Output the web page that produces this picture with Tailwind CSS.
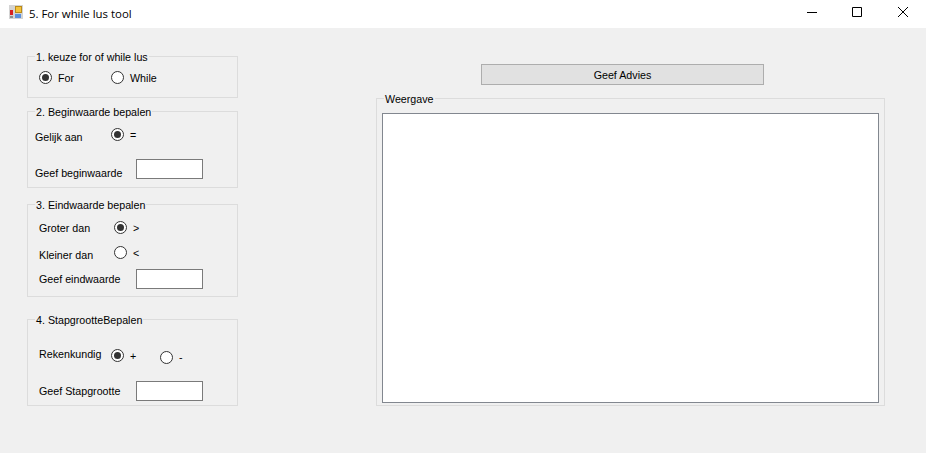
<!DOCTYPE html>
<html lang="en">
<head>
<meta charset="UTF-8">
<title>5. For while lus tool</title>
<script src="https://cdn.jsdelivr.net/npm/@tailwindcss/browser@4"></script>
</head>
<body class="w-[926px] h-[453px] overflow-hidden bg-[#f0f0f0] text-[10.7px] leading-[14px] text-black font-['Liberation_Sans',sans-serif]">

<!-- title bar -->
<header class="h-[28px] bg-white flex items-center">
  <svg class="ml-[9px] mb-[4px] w-[14px] h-[14px]" viewBox="0 0 14 14">
    <rect width="14" height="14" fill="#d4d4d4"/>
    <rect x="6.500" y="1.500" width="6" height="6" fill="#f5c33b" stroke="#b98a1a"/>
    <rect x="1" y="5" width="3" height="5" fill="#d8201f"/>
    <rect x="6" y="9" width="6" height="4" fill="#5a8fdc"/>
    <rect x="1" y="11" width="3" height="2" fill="#8f8f8f"/>
  </svg>
  <span class="ml-[6px] text-[11.4px] font-['Open_Sans',sans-serif]">5. For while lus tool</span>
  <div class="ml-auto flex">
    <svg class="w-[46px] h-[28px]" viewBox="0 0 46 28"><path d="M19 12.500h10" stroke="#000"/></svg>
    <svg class="w-[46px] h-[28px]" viewBox="0 0 46 28"><path d="M18.500 7.500h9v9h-9z" fill="none" stroke="#000"/></svg>
    <svg class="w-[46px] h-[28px]" viewBox="0 0 46 28"><path d="M18 7l10 10M28 7l-10 10" stroke="#000"/></svg>
  </div>
</header>

<main class="flex pl-[27px] pt-[21px]">
  <!-- left column -->
  <div class="w-[211px]">
    <fieldset class="h-[49px] border border-[#dcdcdc]">
      <legend class="ml-[7px] px-[1px] relative top-[1px]">1. keuze for of while lus</legend>
      <div class="flex items-center h-[13px] mt-[8px] pl-[11px]">
        <span class="w-[13px] h-[13px] rounded-full bg-white border border-[#333] flex items-center justify-center"><span class="w-[7px] h-[7px] rounded-full bg-[#333]"></span></span>
        <span class="ml-[6px] w-[53px]">For</span>
        <span class="w-[13px] h-[13px] rounded-full bg-white border border-[#333]"></span>
        <span class="ml-[6px]">While</span>
      </div>
    </fieldset>

    <fieldset class="h-[84px] mt-[6px] border border-[#dcdcdc]">
      <legend class="ml-[7px] px-[1px] relative top-[1px]">2. Beginwaarde bepalen</legend>
      <div class="flex items-center h-[13px] mt-[10px] pl-[7px]">
        <span class="w-[76px] relative top-[2px]">Gelijk aan</span>
        <span class="w-[13px] h-[13px] rounded-full bg-white border border-[#333] flex items-center justify-center"><span class="w-[7px] h-[7px] rounded-full bg-[#333]"></span></span>
        <span class="ml-[6px]">=</span>
      </div>
      <div class="flex items-center h-[20px] mt-[18px] pl-[7px]">
        <span class="w-[101px] relative top-[4px]">Geef beginwaarde</span>
        <input class="w-[67px] h-[20px] bg-white border border-[#7a7a7a]">
      </div>
    </fieldset>

    <fieldset class="h-[100px] mt-[9px] border border-[#dcdcdc]">
      <legend class="ml-[7px] px-[1px] relative top-[1px]">3. Eindwaarde bepalen</legend>
      <div class="flex items-center h-[13px] mt-[10px] pl-[11px]">
        <span class="w-[75px]">Groter dan</span>
        <span class="w-[13px] h-[13px] rounded-full bg-white border border-[#333] flex items-center justify-center"><span class="w-[7px] h-[7px] rounded-full bg-[#333]"></span></span>
        <span class="ml-[6px]">&gt;</span>
      </div>
      <div class="flex items-center h-[13px] mt-[12px] pl-[11px]">
        <span class="w-[75px] relative top-[2px]">Kleiner dan</span>
        <span class="w-[13px] h-[13px] rounded-full bg-white border border-[#333]"></span>
        <span class="ml-[6px]">&lt;</span>
      </div>
      <div class="flex items-center h-[20px] mt-[10px] pl-[11px]">
        <span class="w-[97px]">Geef eindwaarde</span>
        <input class="w-[67px] h-[20px] bg-white border border-[#7a7a7a]">
      </div>
    </fieldset>

    <fieldset class="h-[94px] mt-[15px] border border-[#dcdcdc]">
      <legend class="ml-[7px] px-[1px] relative top-[1px]">4. StapgrootteBepalen</legend>
      <div class="flex items-center h-[13px] mt-[23px] pl-[11px]">
        <span class="w-[72px] relative top-[-2px]">Rekenkundig</span>
        <span class="w-[13px] h-[13px] rounded-full bg-white border border-[#333] flex items-center justify-center"><span class="w-[7px] h-[7px] rounded-full bg-[#333]"></span></span>
        <span class="ml-[6px] w-[30px]">+</span>
        <span class="w-[13px] h-[13px] rounded-full bg-white border border-[#333] relative top-[2px]"></span>
        <span class="ml-[6px] relative top-[1px]">-</span>
      </div>
      <div class="flex items-center h-[20px] mt-[19px] pl-[11px]">
        <span class="w-[97px]">Geef Stapgrootte</span>
        <input class="w-[67px] h-[20px] bg-white border border-[#7a7a7a]">
      </div>
    </fieldset>
  </div>

  <!-- right column -->
  <div class="ml-[138px] w-[509px]">
    <button class="block ml-[105px] mt-[15px] w-[283px] h-[21px] bg-[#e1e1e1] border border-[#adadad]">Geef Advies</button>
    <fieldset class="h-[315px] mt-[6px] border border-[#dcdcdc]">
      <legend class="ml-[7px] px-[1px] relative top-[1px]">Weergave</legend>
      <div class="mt-[8px] ml-[5px] w-[497px] h-[290px] bg-white border border-[#82878f]"></div>
    </fieldset>
  </div>
</main>
</body>
</html>
